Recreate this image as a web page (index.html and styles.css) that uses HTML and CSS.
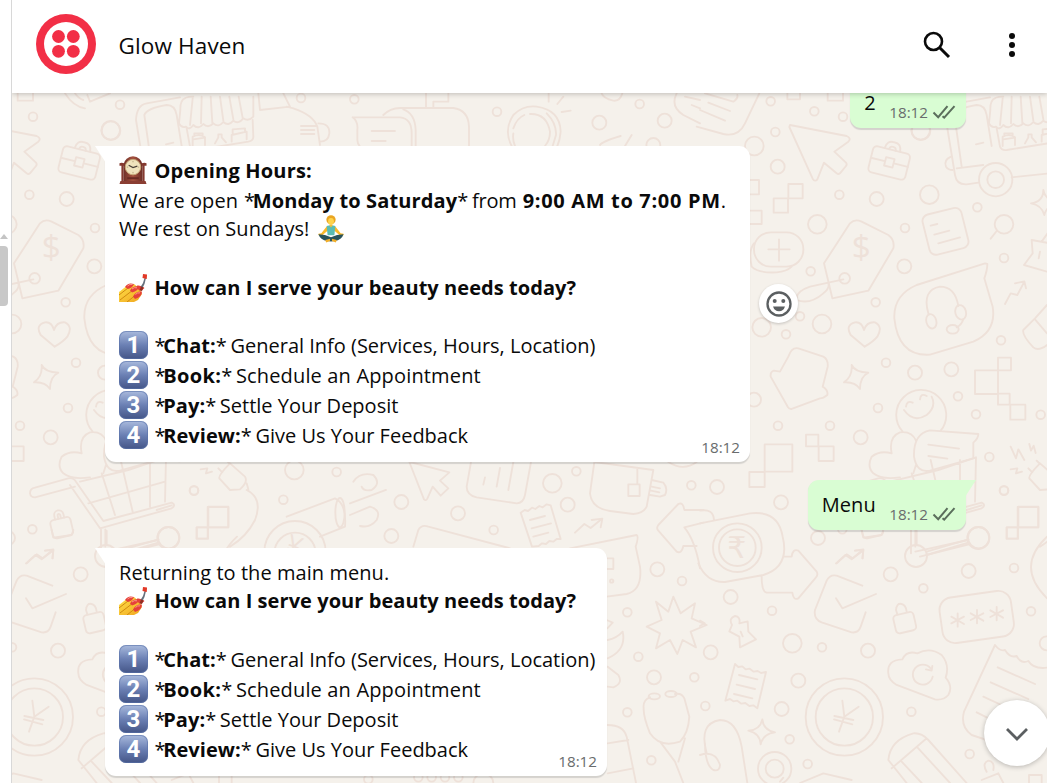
FILE: index.html
```html
<!DOCTYPE html>
<html lang="en">
<head>
<meta charset="utf-8">
<title>Glow Haven</title>
<link rel="stylesheet" href="styles.css">
</head>
<body>
<svg class="defs" width="0" height="0" aria-hidden="true">
  <defs>
    <linearGradient id="wood" x1="0" x2="1"><stop offset="0" stop-color="#6e3028"/><stop offset=".5" stop-color="#a5523f"/><stop offset="1" stop-color="#6b2d26"/></linearGradient>
    <linearGradient id="skin" x1="0" y1="0" x2="1" y2="1"><stop offset="0" stop-color="#ffe14a"/><stop offset="1" stop-color="#f0a51e"/></linearGradient>
    <symbol id="clock" viewBox="0 0 28 29">
      <path d="M4 9Q6 1 14 .3Q22 1 24 9V26H4Z" fill="url(#wood)"/>
      <path d="M0 7.500Q2 6.500 5 7.500V10H4V26H2V10H0ZM28 7.500Q26 6.500 23 7.500V10H24V26H26V10H28Z" fill="#84392f"/>
      <path d="M1 26H27L28 29H0Z" fill="#8a3e33"/>
      <circle cx="14" cy="11.500" r="8" fill="#efe3bd" stroke="#c6a878" stroke-width="1"/>
      <path d="M9.500 9.500L14 12L18.500 10.500" stroke="#4a4038" stroke-width="1.200" fill="none"/>
      <path d="M14 5v1.500M14 16.500v1.500M7.500 11.500H9M19 11.500h1.500" stroke="#a8946c" stroke-width=".8"/>
      <path d="M8 22h12v2H8z" fill="#6a2b24"/>
    </symbol>
    <symbol id="nails" viewBox="0 0 28 28">
      <path d="M0 18L9 11L15 10L20 14L23 20L19 26L15 28H0Z" fill="url(#skin)"/>
      <path d="M0 21L9 14M1 26L14 16M8 28L18 20" stroke="#d08a10" stroke-width="1"/>
      <path d="M6 13Q9 8 15 10Q13.500 14 9 15ZM11 16.500Q14 11.500 20 12.500Q19 17 13 18.500ZM14 22.500Q17 17 23 17.500Q23 23 16 25ZM18 11.500Q23 11 25.500 14Q23 17 19.500 16Z" fill="#e5413a"/>
      <path d="M8.500 12Q11 9.500 13.500 10.500M13 15Q15 13 18 13.800M16.500 20.500Q18 18.500 21 18.800" stroke="#ff958a" fill="none"/>
      <path d="M27 4L25.500 10L23.500 14L21.500 13L24 9L25.500 4Z" fill="#66707c"/>
      <path d="M20.500 16.500L22 12.500L24.500 13.500L23 17Z" fill="#8f2d20"/>
      <path d="M24 0L28 .5L27.800 5L23.500 4Z" fill="#e23826"/>
    </symbol>
    <symbol id="yoga" viewBox="0 0 28 29">
      <circle cx="14" cy="5" r="4.800" fill="#eaa521"/><ellipse cx="14" cy="6.500" rx="3" ry="3.500" fill="#ffd34b"/>
      <path d="M9.500 12L4 19L1 19.500L1 21L5 21L12 15ZM18.500 12L24 19L27 19.500V21L23 21L16 15Z" fill="#f8b92b"/>
      <path d="M9.500 11.500Q14 9.500 18.500 11.500L17.500 21H10.500Z" fill="#5bbcb3"/>
      <path d="M12 10h4l-2 3z" fill="#f5bd35"/>
      <path d="M1 20Q8 20 14 23Q20 20 27 20Q25 26 18 27Q14 28 10 27Q3 26 1 20Z" fill="#29535b"/>
      <path d="M8 26l5-1.500v2.500l-4 1.500zM20 26l-5-1.500v2.500l4 1.500z" fill="#f2af2b"/>
    </symbol>
    <symbol id="ticks" viewBox="0 0 24 16">
      <path d="M1.500 8.500L6.200 13.200L15.500 2.200M10.500 12.200L12.200 13.600L22.500 2.200" fill="none" stroke="#5b6e5c" stroke-width="2" />
    </symbol>
  </defs>
</svg>
<div class="app">
  <aside class="rail"><span class="rail-arrow"></span><span class="rail-thumb"></span></aside>
  <main class="chat">
    <header class="header">
      <svg class="avatar" viewBox="0 0 60 60"><circle cx="30" cy="30" r="30" fill="#f22f46"/><circle cx="30" cy="30" r="22" fill="#fff"/><g fill="#f22f46"><circle cx="22.500" cy="22.500" r="6.400"/><circle cx="37.300" cy="22.500" r="6.400"/><circle cx="22.500" cy="37.300" r="6.400"/><circle cx="37.300" cy="37.300" r="6.400"/></g></svg>
      <h1 class="name">Glow Haven</h1>
      <svg class="search" viewBox="0 0 28 28" fill="none" stroke="#0a0a0a"><circle cx="10.500" cy="10.500" r="8.500" stroke-width="2.600"/><path d="M16.500 16.500L26 26" stroke-width="3"/></svg>
      <svg class="dots" viewBox="0 0 6 24" fill="#0a0a0a"><circle cx="3" cy="3" r="3"/><circle cx="3" cy="12" r="3"/><circle cx="3" cy="21" r="3"/></svg>
    </header>
    <section class="thread">
      <svg class="wallpaper" viewBox="12 93 1035 690" aria-hidden="true">
        <g id="doodles">
          <g transform="scale(.33333)">
            <path d="M195 280Q220 320 255 325M225 280Q235 295 250 300M262 285L270 305L330 280M775 280L780 330L870 320L850 280M880 325Q940 345 952 380L960 435M955 370Q990 370 988 400Q985 425 960 425M903 378h45M903 390h40M903 402h40M545 305Q550 290 580 290M860 320L880 325M408 360Q410 315 440 310L540 292M433 345Q440 325 500 315Q525 315 530 345L545 438M433 345L455 500M408 360L435 525Q440 555 470 553L505 548M440 505L520 495M498 433L520 428M605 532L740 518L990 480M555 295Q540 300 541 330L537 370Q545 385 558 380Q568 392 580 375Q595 390 610 372Q625 386 640 370Q655 384 670 366Q685 380 700 362Q715 374 730 355Q745 366 760 350V290M578 295L570 375M605 290L603 370M632 290L637 368M660 290L670 362M688 290L700 358M716 290L728 354M560 385L570 440Q575 452 590 450L745 425Q760 422 760 410L758 360M578 438V410Q600 400 615 412V435M580 418L615 413M583 408V400H608V405M645 430L655 412V403H665V412L678 427M695 425V405L740 395V418M698 400V388L735 385V395"/>
            <circle cx="557" cy="539" r="50"/><circle cx="557" cy="539" r="25"/><circle cx="360" cy="314" r="13"/><circle cx="332" cy="391" r="28"/><circle cx="903" cy="294" r="13"/>
          </g>
          <g transform="translate(350 80) scale(.33333)">
            <path d="M228 40V82M295 40V65H250V82M100 105Q120 85 150 84H310Q355 90 357 140V200M8 112H150Q185 115 185 160V200M8 112Q25 125 22 150V180Q22 190 30 200M160 88Q195 100 197 150V200M65 153h70M65 183h42M490 145Q500 115 523 105M540 102Q590 100 600 155Q600 180 585 198M495 198Q487 180 490 160M485 198Q460 150 490 105Q520 75 560 80Q630 90 632 155Q630 180 622 198M590 100Q620 130 618 165L608 198M596 40V65M640 50L622 72M635 96L662 92M755 40Q760 55 790 62Q810 65 817 40M750 195Q755 185 812 168M845 165L825 198M980 40Q960 80 1000 105L1050 130M1025 75L1050 85M1005 50L1050 60"/>
            <circle cx="13" cy="58" r="13"/><circle cx="441" cy="95" r="13"/><circle cx="869" cy="72" r="13"/><circle cx="748" cy="128" r="21"/><circle cx="944" cy="122" r="21"/><circle cx="910" cy="195" r="21"/>
          </g>
          <g transform="translate(700) scale(.33333)">
            <path d="M-10 380L70 402Q115 412 135 370L178 280M15 280L100 305Q115 295 112 285M25 308L90 333M0 330L75 362M262 270h38v28h-38zM383 270h46v32h-46zM265 552h43v43h-43zM221 595h43v43h-43zM140 540h37v43h-37zM140 632h45v40h-45zM270 375L440 408Q455 415 445 425L403 455L438 488Q442 493 438 498L420 520Q415 524 410 520L372 488L352 538Q345 547 338 536L268 381ZM692 677l20-5M703 704l45-12M715 730l65-18M890 693L872 716M1030 570Q1030 605 993 610Q1025 615 1033 645Q1040 615 1075 610Q1035 600 1030 570M205 748h64M237 718v64M162 730Q145 750 155 800Q175 820 230 817Q260 815 275 800M372 790L450 670Q465 655 485 665L565 705Q585 720 580 745L505 872L397 895ZM995 720L998 760L972 795L1041 815M995 720L1050 730M1050 690L1025 725M1020 755l-4 20"/>
            <rect x="162" y="697" width="148" height="103" rx="50"/>
            <g transform="translate(568 487) rotate(14)"><rect x="-57" y="-38" width="114" height="80" rx="12"/><path d="M-24-38Q-22-64 0-62Q22-64 24-38M-10-38Q-10-48 0-48Q10-48 10-38M-57 0H-14M14 0H57M-13-13h26v26h-26z"/></g>
            <rect x="-60" y="-60" width="120" height="124" rx="20" transform="translate(736 692) rotate(-14)"/>
            <circle cx="912" cy="673" r="28"/><circle cx="212" cy="304" r="13"/><circle cx="343" cy="334" r="13"/><circle cx="429" cy="350" r="13"/><circle cx="226" cy="396" r="13"/><circle cx="163" cy="438" r="28"/><circle cx="233" cy="500" r="21"/><circle cx="418" cy="584" r="13"/><circle cx="530" cy="597" r="21"/><circle cx="688" cy="584" r="28"/><circle cx="832" cy="622" r="13"/><circle cx="352" cy="673" r="28"/><circle cx="615" cy="684" r="13"/><circle cx="663" cy="392" r="28"/><path d="M753 470Q730 480 738 500Q745 510 758 510"/>
            <text x="455" y="776" font-size="100">$</text>
          </g>
          <g transform="translate(700 240) scale(.33333)">
            <path d="M430 118L330 140Q285 155 290 180Q330 195 370 160Q390 145 385 130M494 320L452 285Q435 255 465 247Q485 245 492 270Q500 245 525 247Q550 260 532 290Q520 305 494 320M855 70L650 135Q580 165 583 235Q595 350 690 344L820 305Q890 275 878 200L853 115Q862 90 862 72ZM685 220Q665 150 720 140Q765 140 775 198M790 238Q785 255 770 262M915 192L932 160L952 165L973 125M945 130L973 124L978 145M1041 195L1005 235L970 270Q965 285 1000 322Q1015 335 1041 315M1005 238L1041 280M265 350Q275 320 295 325L370 350Q385 358 383 380L368 440Q385 450 382 465Q370 475 360 475L275 507Q268 508 264 502L212 410Q210 395 222 392L240 395ZM455 375Q465 397 505 398Q480 410 480 447Q465 425 432 427Q458 410 455 375M825 391h69v71h-69zM894 353h39v38h-39zM894 391v70M894 461h35v33h-35zM931 494h45v45h-45zM318 584h37v35h-37zM356 619h45v44h-45zM194 613h83v82h-83zM148 696h46v45h-46zM608 575A75 75 0 1 1 722 572M612 510Q640 550 680 525Q710 500 695 470M618 500Q620 480 638 488M660 478Q662 458 680 468M575 640Q565 590 600 577Q635 572 648 602M575 640Q540 630 515 650Q500 680 520 700Q545 720 600 712M642 650Q640 580 690 571L835 582Q835 595 820 608L820 655L690 692Q650 700 642 650M685 614L777 626M685 648L742 656M932 620L948 655L955 628L973 660M988 612l5 20l8-15l6 22M932 688l20-3l-4 15l18-5M640 700L648 675"/>
            <ellipse cx="694" cy="244" rx="15" ry="22" transform="rotate(-15 694 244)"/><ellipse cx="782" cy="217" rx="16" ry="22" transform="rotate(-15 782 217)"/><ellipse cx="758" cy="268" rx="18" ry="13"/>
            <circle cx="332" cy="94" r="13"/><circle cx="434" cy="115" r="16"/><circle cx="613" cy="79" r="21"/><circle cx="527" cy="187" r="13"/><circle cx="912" cy="54" r="13"/><circle cx="366" cy="252" r="28"/><circle cx="300" cy="229" r="13"/><circle cx="258" cy="283" r="13"/><circle cx="185" cy="262" r="28"/><circle cx="903" cy="301" r="13"/><circle cx="558" cy="368" r="13"/><circle cx="645" cy="398" r="21"/><circle cx="754" cy="388" r="21"/><circle cx="774" cy="469" r="13"/><circle cx="828" cy="523" r="13"/><circle cx="1022" cy="524" r="13"/><circle cx="534" cy="504" r="13"/><circle cx="390" cy="557" r="13"/><circle cx="234" cy="557" r="13"/><circle cx="482" cy="592" r="21"/><circle cx="162" cy="479" r="21"/><circle cx="868" cy="651" r="13"/><circle cx="912" cy="751" r="13"/><circle cx="51" cy="741" r="21"/><circle cx="243" cy="787" r="21"/>
          </g>
          <g transform="translate(0 440) scale(.33333)">
            <path d="M205 115L105 143Q90 145 90 160Q92 172 105 172L225 140M205 115Q220 112 228 125L310 243L515 188Q530 195 515 205L300 265L210 135M240 125L385 90L498 52M265 190L495 125M305 100L345 225M362 60L398 215M450 60V200M498 52L495 185M303 268V340M316 268V320M316 335L475 300M330 350L480 312M690 70L735 110Q745 125 720 148L690 150L658 115Q655 105 690 70M655 85l12 12M680 62l10 10M740 150Q790 175 765 240Q740 290 690 320M740 130L745 148M625 200h60v62h-60zM590 262h34v34h-34zM80 370L110 343L128 355L158 330M135 332L160 328L158 355M860 230L1005 175Q1040 190 1035 260L960 290"/>
            <ellipse cx="1020" cy="218" rx="14" ry="44"/><circle cx="885" cy="335" r="92"/><circle cx="885" cy="340" r="62"/>
            <g transform="translate(185 262) rotate(-13)"><rect x="-31" y="-27" width="62" height="56" rx="11"/><path d="M-14-27V-38a14 14 0 0 1 28 0V-27M-4-27V-37a4 4 0 0 1 8 0V-27"/></g>
            <circle cx="883" cy="90" r="28"/><circle cx="1010" cy="96" r="13"/><circle cx="582" cy="152" r="13"/><circle cx="850" cy="179" r="13"/><circle cx="97" cy="268" r="13"/><circle cx="506" cy="293" r="32"/>
            <text x="858" y="345" font-size="80" transform="rotate(20 885 320)">¥</text>
          </g>
          <g transform="translate(350 440) scale(.33333)">
            <path d="M178 66L222 178Q228 184 232 176L248 140L272 167L295 145L270 122L298 97L180 66M363 66L350 140Q350 165 380 172L500 190Q520 190 525 165L543 66M405 112l-5 22M450 84L440 140M490 66L475 150M512 218l12-8l10 3l12-10l10 4l12-9l10 4l12-9l12 3L632 297l-12 0l-10 8l-12-2l-10 9l-12-2l-10 8l-20 2ZM540 240l45-12M545 265l58-15M550 290l45-12M675 278L703 252L722 264L754 238M725 240L757 236L752 262M733 66L720 160Q725 205 780 213L850 222Q880 220 890 200L910 90L733 66M835 133h34v35h-34zM862 85V133M905 120L940 128Q955 145 945 165L930 170L900 165M905 140l25 5M903 152l25 5M1060 210H1003Q1000 185 985 192L925 255Q918 265 925 272L980 335Q995 342 1000 318H1040M1060 248L1003 262Q1035 300 1050 385M660 325L860 285Q867 290 857 320L870 380Q878 450 830 462L770 470M970 470L992 520L1035 490L1025 535L1070 555L1022 575L1038 622L998 600L982 642L960 600L918 625L930 580L890 560L935 540L918 485L955 515ZM10 125Q30 95 70 105Q95 130 65 150Q40 155 35 140M0 190L108 150M0 225L60 200Q95 210 80 240Q60 265 30 258M190 320L205 270Q215 252 235 260L480 325M770 540L788 548L772 565M773 600Q800 595 818 575Q830 630 773 655M773 680L805 705Q820 730 790 742L773 740M773 855Q820 855 830 890L858 1029M773 910L835 900M773 1000L850 985M900 772Q878 780 881 805Q880 830 900 880Q930 925 990 905Q1015 880 1018 830L1003 775Q995 758 975 762M930 905L975 965L1000 1029M1005 895L985 965M770 355h20v32h-20M955 66Q1000 95 1040 66"/>
            <ellipse cx="913" cy="769" rx="17" ry="9"/><ellipse cx="963" cy="762" rx="17" ry="9"/>
            <circle cx="607" cy="130" r="28"/><circle cx="679" cy="94" r="13"/><circle cx="653" cy="194" r="21"/><circle cx="154" cy="186" r="21"/><circle cx="324" cy="220" r="21"/><circle cx="124" cy="288" r="21"/><circle cx="431" cy="270" r="13"/><circle cx="1024" cy="136" r="13"/><circle cx="922" cy="388" r="21"/><circle cx="996" cy="423" r="13"/><circle cx="832" cy="517" r="13"/><circle cx="865" cy="650" r="13"/><circle cx="912" cy="712" r="21"/><circle cx="1033" cy="712" r="13"/><circle cx="832" cy="817" r="13"/><circle cx="904" cy="961" r="13"/><circle cx="785" cy="423" r="5"/>
            <circle cx="205" cy="1012" r="13"/><circle cx="245" cy="1012" r="13"/><circle cx="285" cy="1012" r="13"/><circle cx="325" cy="1012" r="13"/><circle cx="55" cy="1018" r="13"/><circle cx="400" cy="1030" r="30"/>
          </g>
          <g transform="translate(700 460) scale(.33333)">
            <path d="M953 141h62v61h-62zM920 202h33v34h-33zM0 190L150 160Q235 150 248 230Q270 320 190 345L75 366Q20 368 -5 310M0 152Q40 145 42 180M250 290H275Q278 265 295 272L350 335Q355 345 348 352L295 415Q280 422 277 398H200Q185 395 185 350M487 377L410 347Q390 342 380 362L345 450Q340 478 365 487L455 517Q475 520 482 500L497 457M408 415L427 445L528 402M408 310L436 285L455 298L488 272M465 272L490 270L487 295M565 640Q560 600 607 598Q620 570 652 580Q690 560 725 585Q750 615 737 653Q760 680 745 705Q730 722 705 718L590 675Q565 660 565 640M692 625A30 30 0 1 0 698 650M697 618L695 632L678 628M105 612l10 9l12-2l10 9l12-2l12 9l12-2l10 6l15-3L172 745l-12-9l-12 2l-12-9l-12 2l-12-9l-12 2l-10-7l-14 5ZM117 645l55 13M110 674l55 13M102 702l55 13M885 555q15 20 30 15q15 25 35 18q12 25 35 15q15 25 56 20M885 555L792 755Q780 800 815 825L860 840M893 622L1005 672M872 667L985 717M850 710L930 747M830 757L860 772M20 880Q-5 790 60 780Q110 780 125 860L142 969M0 885Q45 870 60 915Q60 935 40 930Q15 915 15 850M187 778Q190 810 225 817Q190 820 182 853Q180 820 145 812Q180 810 187 778M565 900Q570 840 640 820Q665 818 685 840L800 969M575 925L680 835M605 905L665 969M652 862L750 969M565 900L620 969M300 969L370 940L455 960M96 495Q85 475 105 468Q122 470 118 490L143 484L145 515L168 538L120 562L118 530L88 514ZM122 515l6 14M633 212V255M650 212V255M680 275L805 238M680 285L805 248M0 482L14 490L0 498M1041 230Q945 320 1041 415M485 210L490 233L545 225L550 210M845 960l50-20l15 29M860 935Q845 910 865 902Q885 905 880 930M987 969V945h38v24M240 965l10-12M800 150L845 136"/>
            <rect x="-108" y="-68" width="216" height="138" rx="38" transform="translate(830 470) rotate(-8)"/>
            <rect x="-31" y="-27" width="62" height="56" rx="11" transform="translate(614 487) rotate(-13)"/><path d="M592 463L588 450Q590 428 605 432Q618 435 620 455"/>
            <circle cx="112" cy="263" r="73"/><circle cx="112" cy="263" r="55"/><circle cx="433" cy="771" r="116"/><circle cx="433" cy="771" r="86"/><circle cx="224" cy="926" r="50"/><circle cx="224" cy="926" r="27"/>
            <circle cx="354" cy="234" r="21"/><circle cx="835" cy="234" r="33"/><circle cx="648" cy="288" r="33"/><circle cx="572" cy="343" r="21"/><circle cx="806" cy="333" r="21"/><circle cx="942" cy="324" r="13"/><circle cx="670" cy="385" r="13"/><circle cx="92" cy="411" r="21"/><circle cx="216" cy="452" r="13"/><circle cx="277" cy="550" r="28"/><circle cx="366" cy="562" r="13"/><circle cx="504" cy="572" r="21"/><circle cx="32" cy="577" r="21"/><circle cx="295" cy="662" r="21"/><circle cx="245" cy="747" r="21"/><circle cx="16" cy="738" r="13"/><circle cx="269" cy="838" r="13"/><circle cx="323" cy="912" r="13"/><circle cx="634" cy="755" r="13"/><circle cx="809" cy="882" r="13"/><circle cx="993" cy="454" r="13"/><circle cx="1040" cy="550" r="21"/>
            <path d="M427 722L433 770L476 740M433 770L417 815M403 768L460 780M402 778L457 793M773 460V500M754 470L792 492M754 490L792 470M831 450V490M812 460L850 482M812 480L850 460M890 441V481M871 451L909 473M871 471L909 451"/>
            <text x="82" y="295" font-size="90">₹</text>
          </g>
        </g>
        <use href="#doodles" x="-810"/><use href="#doodles" x="810"/>
      </svg>

      <div class="bubble out first"><span class="body">2</span><span class="time">18:12</span><svg class="ticks"><use href="#ticks"/></svg></div>

      <div class="bubble in wide">
        <i class="tail"></i>
        <p class="line tall"><svg class="emoji"><use href="#clock"/></svg><b class="title">Opening Hours:</b></p>
        <p class="line">We are open<span class="gap"></span><span class="star">*</span><b class="days">Monday to Saturday</b><span class="star">*</span><span class="gap"></span><span class="from">from</span><span class="gap"></span><b class="hours">9:00 AM to 7:00 PM</b>.</p>
        <p class="line up">We rest on Sundays!<svg class="emoji trailing"><use href="#yoga"/></svg></p>
        <p class="line"></p>
        <p class="line"><svg class="emoji"><use href="#nails"/></svg><b>How can I serve your beauty needs today?</b></p>
        <p class="line"></p>
        <p class="line tall"><span class="key">1</span><span class="star">*</span><b>Chat:</b><span class="star">*</span><span class="gap"></span><span class="general">General Info (Services, Hours, Location)</span></p>
        <p class="line tall"><span class="key">2</span><span class="star">*</span><b class="book">Book:</b><span class="star">*</span><span class="gap"></span><span class="schedule">Schedule an Appointment</span></p>
        <p class="line tall"><span class="key">3</span><span class="star">*</span><b>Pay:</b><span class="star">*</span><span class="gap"></span><span class="plain">Settle Your Deposit</span></p>
        <p class="line tall"><span class="key">4</span><span class="star">*</span><b>Review:</b><span class="star">*</span><span class="gap"></span><span class="plain">Give Us Your Feedback</span></p>
        <span class="time">18:12</span>
      </div>

      <div class="bubble out"><i class="tail"></i><span class="body">Menu</span><span class="time">18:12</span><svg class="ticks"><use href="#ticks"/></svg></div>

      <div class="bubble in narrow">
        <i class="tail"></i>
        <p class="line">Returning to the main menu.</p>
        <p class="line up"><svg class="emoji"><use href="#nails"/></svg><b>How can I serve your beauty needs today?</b></p>
        <p class="line"></p>
        <p class="line tall"><span class="key">1</span><span class="star">*</span><b>Chat:</b><span class="star">*</span><span class="gap"></span><span class="general">General Info (Services, Hours, Location)</span></p>
        <p class="line tall"><span class="key">2</span><span class="star">*</span><b class="book">Book:</b><span class="star">*</span><span class="gap"></span><span class="schedule">Schedule an Appointment</span></p>
        <p class="line tall"><span class="key">3</span><span class="star">*</span><b>Pay:</b><span class="star">*</span><span class="gap"></span><span class="plain">Settle Your Deposit</span></p>
        <p class="line tall"><span class="key">4</span><span class="star">*</span><b>Review:</b><span class="star">*</span><span class="gap"></span><span class="plain">Give Us Your Feedback</span></p>
        <span class="time">18:12</span>
      </div>

      <button class="react" aria-label="React"><svg viewBox="0 0 26 26"><circle cx="13" cy="13" r="11.500" fill="none" stroke="#5b5f61" stroke-width="2.300"/><g fill="#5b5f61"><circle cx="8.700" cy="10" r="2"/><circle cx="17.300" cy="10" r="2"/><path d="M7 15.500H19Q17.500 20.300 13 20.300Q8.500 20.300 7 15.500Z"/></g></svg></button>
      <button class="down" aria-label="Scroll down"><svg viewBox="0 0 24 14"><path d="M2 2L12 12L22 2" fill="none" stroke="#5b5f61" stroke-width="2.800"/></svg></button>
    </section>
  </main>
</div>
</body>
</html>
```

FILE: styles.css
```css
* { box-sizing: border-box; }
body { margin: 0; background: #fff; color: #0a0a0a; font-family: "Open Sans", "Noto Sans", sans-serif; }
.defs { display: block; height: 0; }
.app { display: flex; width: 1047px; height: 783px; overflow: hidden; }
.rail { display: flex; flex-direction: column; width: 12px; border-right: 1px solid #d8d8d8; padding-top: 234px; flex: none; position: relative; z-index: 3; background: #fff; }
.rail-arrow { border: 4px solid transparent; border-top: 0; border-bottom: 5px solid #c4c4c4; width: 8px; }
.rail-thumb { width: 8px; height: 60px; margin-top: 7px; background: #c8c8c8; border-radius: 0 4px 4px 0; }
.chat { display: flex; flex-direction: column; flex: 1; min-width: 0; }
.header { display: flex; align-items: center; height: 93px; padding: 0 32px 5px 24px; background: #fff; box-shadow: 0 1px 5px rgba(0,0,0,.22); z-index: 2; flex: none; }
.avatar { width: 60px; height: 60px; }
.name { flex: 1; margin: 3px 0 0 22.500px; font-size: 22.500px; font-weight: 400; letter-spacing: .14px; }
.search { width: 28px; height: 28px; margin: 1px 58px 0 0; }
.dots { width: 6px; height: 24px; margin-top: 2px; }
.thread { position: relative; display: flex; flex-direction: column; gap: 18px; flex: 1; background: #f5f1eb; overflow: hidden; padding: 0 81px 0 93px; }
.wallpaper { position: absolute; left: 0; top: 0; width: 1035px; height: 690px; fill: none; stroke: #eee1d9; stroke-width: 5.600; stroke-linejoin: round; stroke-linecap: round; }
.wallpaper text { fill: #eee1d9; stroke: none; font-family: "Open Sans", "DejaVu Sans", sans-serif; }
.bubble { position: relative; display: flex; border-radius: 11px; box-shadow: 0 1.500px 1px rgba(11,20,26,.14); font-size: 20px; letter-spacing: .06px; flex: none; }
.in { flex-direction: column; align-self: flex-start; background: #fff; padding: 10px 10px 11px 14px; border-top-left-radius: 0; }
.wide { width: 645px; }
.narrow { width: 502px; }
.out { align-self: flex-end; align-items: center; height: 50px; padding: 0 10px 0 14px; background: #d9fdd3; border-top-right-radius: 0; }
.body { margin-top: -2px; }
.first { margin-top: -15px; }
.tail { position: absolute; top: 0; width: 11px; height: 17px; }
.in .tail { left: -10px; background: #fff; clip-path: polygon(0 0, 100% 0, 100% 100%); }
.out .tail { right: -10px; background: #d9fdd3; clip-path: polygon(0 0, 100% 0, 0 100%); }
.line { display: flex; align-items: center; height: 29px; margin: 0; white-space: pre; }
.tall { height: 30px; padding-bottom: 2px; }
.up { padding-bottom: 2px; }
.gap { flex: none; width: 6px; }
.star { flex: none; width: 8.700px; letter-spacing: -1px; }
.title { letter-spacing: .19px; }
.days { letter-spacing: .14px; }
.from { letter-spacing: -.2px; }
.hours { letter-spacing: .67px; }
.book { letter-spacing: .34px; }
.schedule { letter-spacing: .16px; }
.general { letter-spacing: -.01px; }
.plain { letter-spacing: 0; }
.emoji { flex: none; width: 28px; height: 28px; margin-right: 7.500px; }
.trailing { margin: 0 0 0 8px; }
.key { display: flex; flex: none; align-items: center; justify-content: center; width: 29px; height: 28px; margin-right: 6.500px; border-radius: 7px; background: linear-gradient(#a9badd, #6b80b4 50%, #445587); box-shadow: inset 0 0 0 1px rgba(90,115,170,.6); color: #fff; font: 700 24px Roboto, sans-serif; }
.time { font-size: 15.200px; color: #696c6d; letter-spacing: 0; }
.in .time { position: absolute; right: 10px; bottom: 5.500px; }
.out .time { margin: 18px 4px 0 13.500px; }
.ticks { width: 24px; height: 16px; margin-top: 18px; }
.react, .down { position: absolute; display: flex; align-items: center; justify-content: center; padding: 0; border: 0; border-radius: 50%; background: #fff; }
.react { left: 747px; top: 191px; width: 39px; height: 39px; box-shadow: 0 1px 3px rgba(0,0,0,.2); }
.react svg { width: 26px; height: 26px; }
.down { left: 972px; top: 607px; width: 66px; height: 66px; box-shadow: 0 1px 5px rgba(0,0,0,.25); }
.down svg { width: 24px; height: 14px; margin-top: 2px; }
```
